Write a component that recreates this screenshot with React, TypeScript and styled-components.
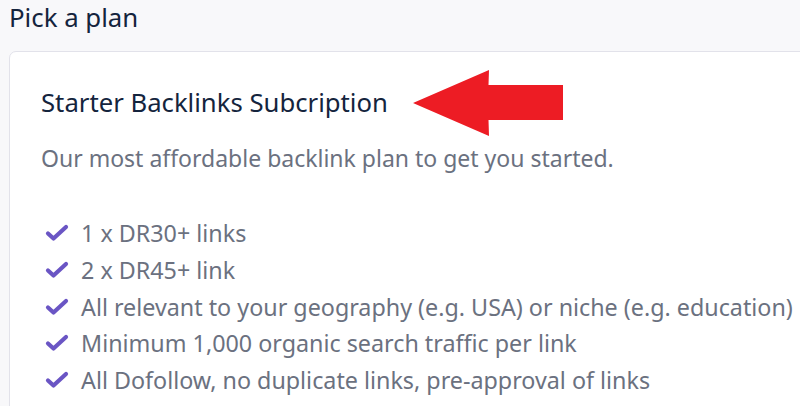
import React from "react";
import styled, { createGlobalStyle } from "styled-components";

const Global = createGlobalStyle`
  html, body { margin: 0; padding: 0; background: #f8f8fa; overflow: hidden; }
  body { font-family: "Noto Sans", "Open Sans", sans-serif; }
`;

const Page = styled.div`
  width: 800px;
  height: 406px;
  overflow: hidden;
  padding: 0 0 0 9px;
  box-sizing: border-box;
`;

const Heading = styled.h2`
  margin: 0;
  height: 51px;
  font-size: 25.8px;
  font-weight: 400;
  line-height: 35px;
  color: #14243d;
`;

const Card = styled.section`
  width: 840px;
  background: #fff;
  border: 1px solid #e2e2ea;
  border-radius: 7px;
  padding: 35px 32px 40px 31px;
  box-sizing: border-box;
`;

const TitleRow = styled.div`
  display: flex;
  align-items: center;
  gap: 25px;
  height: 32px;
`;

const Title = styled.h3`
  margin: 0;
  font-size: 25.7px;
  font-weight: 400;
  line-height: 32px;
  color: #14243d;
  white-space: nowrap;
`;

const Description = styled.p`
  margin: 24px 0 0;
  font-size: 23px;
  line-height: 30px;
  color: #6b7180;
  white-space: nowrap;
`;

const Features = styled.ul`
  list-style: none;
  margin: 45px 0 0;
  padding: 0 0 0 4px;
  display: flex;
  flex-direction: column;
  gap: 6.75px;
`;

const Feature = styled.li`
  display: flex;
  align-items: center;
  gap: 12px;
  height: 30px;
  font-size: 23.3px;
  color: #6b7180;
  white-space: nowrap;
`;

const Check = () => (
  <svg width="24" height="18" viewBox="0 0 24 18">
    <path d="M3 9.5 L8.5 14.5 L21 3" fill="none" stroke="#6a55c4" strokeWidth="4.2" strokeLinecap="round" strokeLinejoin="round" />
  </svg>
);

const Arrow = () => (
  <svg width="151" height="66" viewBox="0 0 151 66">
    <path d="M0 33 L76 0 L75.5 15 L150 15 L150 50 L75.5 50 L76 66 Z" fill="#ed1c24" />
  </svg>
);

const features = [
  "1 x DR30+ links",
  "2 x DR45+ link",
  "All relevant to your geography (e.g. USA) or niche (e.g. education)",
  "Minimum 1,000 organic search traffic per link",
  "All Dofollow, no duplicate links, pre-approval of links",
];

export default function App() {
  return (
    <>
      <Global />
      <Page>
        <Heading>Pick a plan</Heading>
        <Card>
          <TitleRow>
            <Title>Starter Backlinks Subcription</Title>
            <Arrow />
          </TitleRow>
          <Description>Our most affordable backlink plan to get you started.</Description>
          <Features>
            {features.map((f) => (
              <Feature key={f}>
                <Check />
                {f}
              </Feature>
            ))}
          </Features>
        </Card>
      </Page>
    </>
  );
}
